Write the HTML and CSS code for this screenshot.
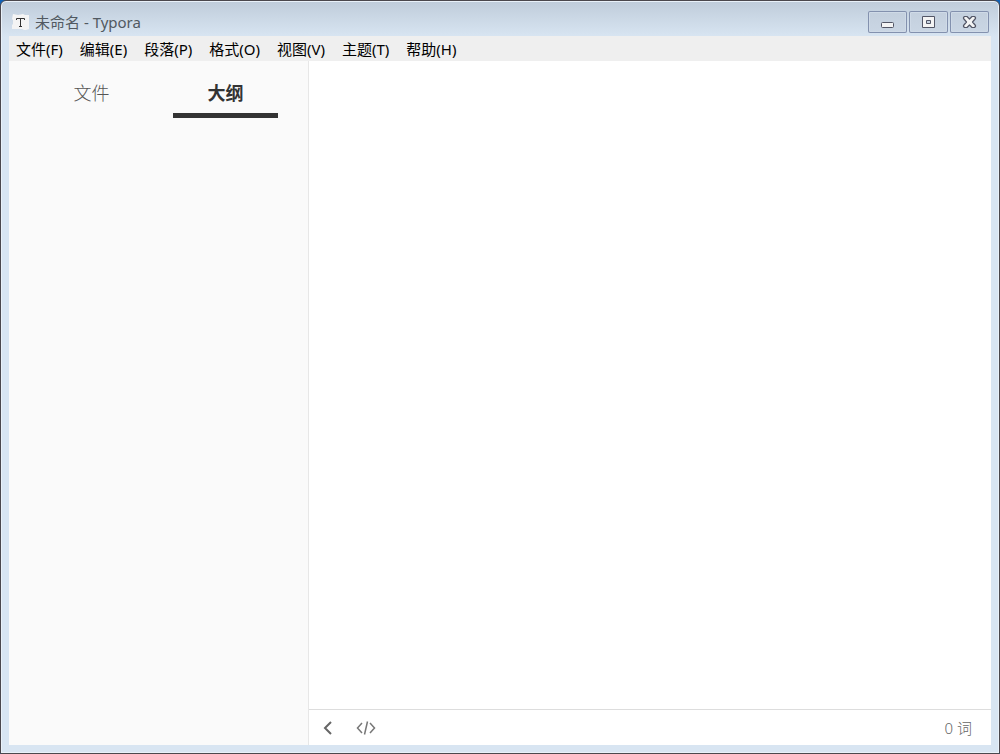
FILE: index.html
```html
<!DOCTYPE html>
<html lang="zh-CN">
<head>
<meta charset="utf-8">
<title>未命名 - Typora</title>
<link rel="stylesheet" href="styles.css">
</head>
<body>
<div class="window">
  <header class="titlebar">
    <svg class="app-icon" width="18" height="18" viewBox="0 0 18 18" aria-hidden="true">
      <path d="M1 1L6 2L11 1L13 2H17V16L14 17H12L10 16H0V12L1 11V7L0 6Z" fill="#f4f4f4"/>
      <path d="M4.500 7V5.500H12.500V7M8.500 5.500V13.500M7 13.500H10" fill="none" stroke="#333"/>
    </svg>
    <h1 class="title">未命名 - Typora</h1>
    <div class="controls">
      <button class="control" type="button" aria-label="最小化">
        <svg width="39" height="22" viewBox="0 0 39 22"><rect x="13.500" y="11.500" width="12" height="5" rx="1" fill="#f4f4f4" stroke="#535666"/></svg>
      </button>
      <button class="control" type="button" aria-label="最大化">
        <svg width="39" height="22" viewBox="0 0 39 22"><path fill-rule="evenodd" d="M13.500 5.500h12v11h-12zM17.500 9.500v3h4v-3z" fill="#f4f4f4" stroke="#535666" stroke-linejoin="round"/></svg>
      </button>
      <button class="control" type="button" aria-label="关闭">
        <svg width="39" height="22" viewBox="0 0 39 22"><path d="M14.500 5.500H17L19.500 8L22 5.500H24.500L25.500 6.500V7.500L22.500 11L25.500 14.500V15.500L24.500 16.500H22L19.500 14L17 16.500H14.500L13.500 15.500V14.500L16.500 11L13.500 7.500V6.500Z" fill="#f4f4f4" stroke="#535666" stroke-width="1.200" stroke-linejoin="round"/></svg>
      </button>
    </div>
  </header>
  <div class="client">
    <nav class="menubar">
      <button class="menu" type="button">文件(F)</button>
      <button class="menu" type="button">编辑(E)</button>
      <button class="menu" type="button">段落(P)</button>
      <button class="menu" type="button">格式(O)</button>
      <button class="menu" type="button">视图(V)</button>
      <button class="menu" type="button">主题(T)</button>
      <button class="menu" type="button">帮助(H)</button>
    </nav>
    <div class="workspace">
      <aside class="sidebar">
        <div class="tabs" role="tablist">
          <button class="tab" type="button" role="tab" aria-selected="false">文件</button>
          <button class="tab tab-active" type="button" role="tab" aria-selected="true">大纲</button>
        </div>
      </aside>
      <main class="editor">
        <div class="page"></div>
        <footer class="statusbar">
          <button class="status-button" type="button" aria-label="侧边栏">
            <svg width="10" height="14" viewBox="0 0 10 14"><path d="M8 1L2 7L8 13" fill="none" stroke="#666" stroke-width="2"/></svg>
          </button>
          <button class="status-button" type="button" aria-label="源代码模式">
            <svg width="20" height="14" viewBox="0 0 20 14"><path d="M6 2L1.500 7L6 12M14 2L18.500 7L14 12M11.500 0.500L8.500 13.500" fill="none" stroke="#777" stroke-width="1.500"/></svg>
          </button>
          <button class="status-button word-count" type="button">0 词</button>
        </footer>
      </main>
    </div>
  </div>
</div>
</body>
</html>
```
FILE: styles.css
```css
* {
  box-sizing: border-box;
}

body {
  margin: 0;
  background: #0f61b8;
  font-family: "Noto Sans", "Noto Sans CJK SC", sans-serif;
}

button {
  padding: 0;
  border: 0;
  background: none;
  font: inherit;
  color: inherit;
}

svg {
  display: block;
}

.window {
  display: flex;
  flex-direction: column;
  height: 100vh;
  padding: 0 7px 7px;
  border: 1px solid #4b484d;
  border-radius: 6px 6px 0 0;
  background: linear-gradient(#bfccda, #d8e5f2 36px);
  box-shadow: inset 0 0 0 1px #e9f1f9;
}

.titlebar {
  display: flex;
  align-items: center;
  height: 35px;
  flex-shrink: 0;
  padding: 6px 3px 0 4px;
}

.app-icon {
  margin-right: 5px;
}

.title {
  flex: 1;
  margin: 0;
  font-size: 15px;
  line-height: 20px;
  font-weight: 400;
  color: #515961;
}

.controls {
  display: flex;
  gap: 2px;
}

.control {
  width: 39px;
  height: 22px;
  border-radius: 2px;
  background: linear-gradient(#c3cfdd, #cad6e4);
  box-shadow: inset 0 0 0 1px #8391ae, inset 0 0 0 2px #cfdae7;
}

.client {
  display: flex;
  flex: 1;
  flex-direction: column;
  min-height: 0;
  margin: 0 1px 1px;
}

.menubar {
  display: flex;
  gap: 17px;
  padding: 1px 7px 0;
  background: #efefef;
  color: #000;
  font-size: 15px;
  line-height: 24px;
}

.workspace {
  display: flex;
  flex: 1;
  min-height: 0;
}

.sidebar {
  width: 300px;
  flex-shrink: 0;
  padding: 8px 30px 0;
  border-right: 1px solid #e7e7e7;
  background: #fafafa;
}

.tabs {
  display: flex;
  gap: 29px;
}

.tab {
  flex: 1;
  height: 49px;
  padding-top: 2px;
  border-bottom: 5px solid transparent;
  font-family: "Noto Sans CJK SC", sans-serif;
  font-size: 18px;
  font-weight: 300;
  line-height: 42px;
  color: #555;
}

.tab-active {
  border-color: #333;
  font-weight: 700;
  color: #333;
}

.editor {
  display: flex;
  flex: 1;
  flex-direction: column;
  background: #fff;
}

.page {
  flex: 1;
}

.statusbar {
  display: flex;
  align-items: center;
  gap: 23px;
  height: 36px;
  padding: 0 19px 0 14px;
  border-top: 1px solid #ddd;
  color: #666;
  font-size: 15px;
  line-height: 20px;
}

.word-count {
  margin-left: auto;
  font-weight: 300;
}
```
